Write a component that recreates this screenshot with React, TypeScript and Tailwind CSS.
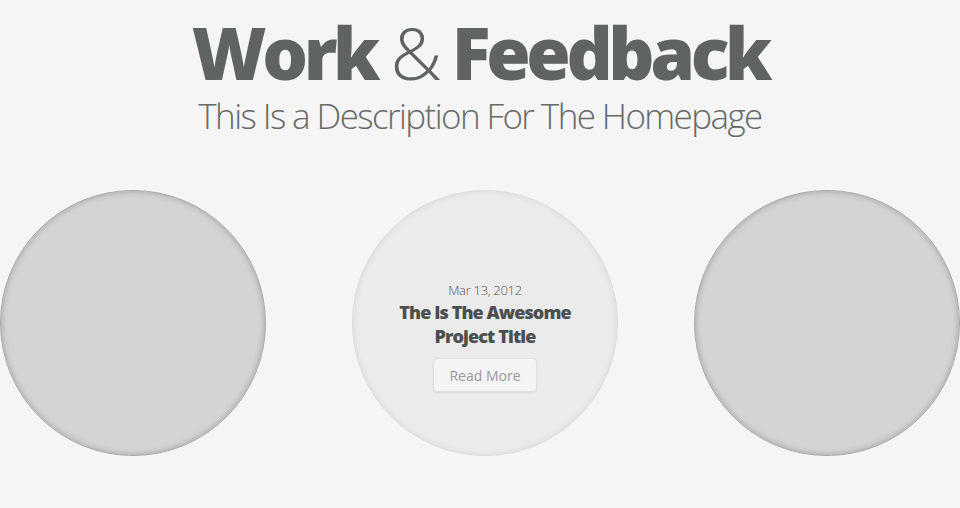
export default function App() {
  return (
    <main className="w-[960px] h-[508px] overflow-hidden bg-[#f5f5f5] font-['Open_Sans',sans-serif]">
      <header className="flex flex-col items-center pt-[4px]">
        <h1 className="text-[72px] leading-[96px] tracking-[-4.4px] text-[#5f6462] whitespace-nowrap">
          <span className="font-extrabold">Work</span>
          <span className="font-light"> &amp; </span>
          <span className="font-extrabold">Feedback</span>
        </h1>
        <p className="mt-[-4px] text-[35px] leading-[40px] font-light tracking-[-1.6px] text-[#666a69] whitespace-nowrap">
          This Is a Description For The Homepage
        </p>
      </header>

      <section className="flex mt-[54px]">
        <div className="w-[266px] h-[266px] shrink-0 rounded-full bg-[#d4d4d4] border border-[#a9a9a9] shadow-[inset_0_0_6px_rgba(0,0,0,0.25)]" />

        <div className="w-[266px] h-[266px] shrink-0 rounded-full bg-[#ebebeb] border border-[#dcdcdc] shadow-[inset_0_0_6px_rgba(0,0,0,0.08)] flex flex-col items-center pt-[90px] ml-[86px]">
          <p className="text-[13px] leading-[18px] font-light text-[#555] tracking-[-0.3px]">Mar 13, 2012</p>
          <h2 className="mt-[1px] text-[18px] leading-[24px] font-extrabold text-[#4b4f4e] text-center tracking-[-0.9px]">
            The Is The Awesome
            <br />
            Project Title
          </h2>
          <button className="mt-[10px] w-[104px] h-[34px] rounded-[4px] bg-[#f4f4f4] border border-[#e0e0e0] shadow-[0_1px_2px_rgba(0,0,0,0.08)] text-[14px] text-[#999]">
            Read More
          </button>
        </div>

        <div className="w-[266px] h-[266px] shrink-0 rounded-full bg-[#d4d4d4] border border-[#a9a9a9] shadow-[inset_0_0_6px_rgba(0,0,0,0.25)] ml-[76px]" />
      </section>
    </main>
  );
}
